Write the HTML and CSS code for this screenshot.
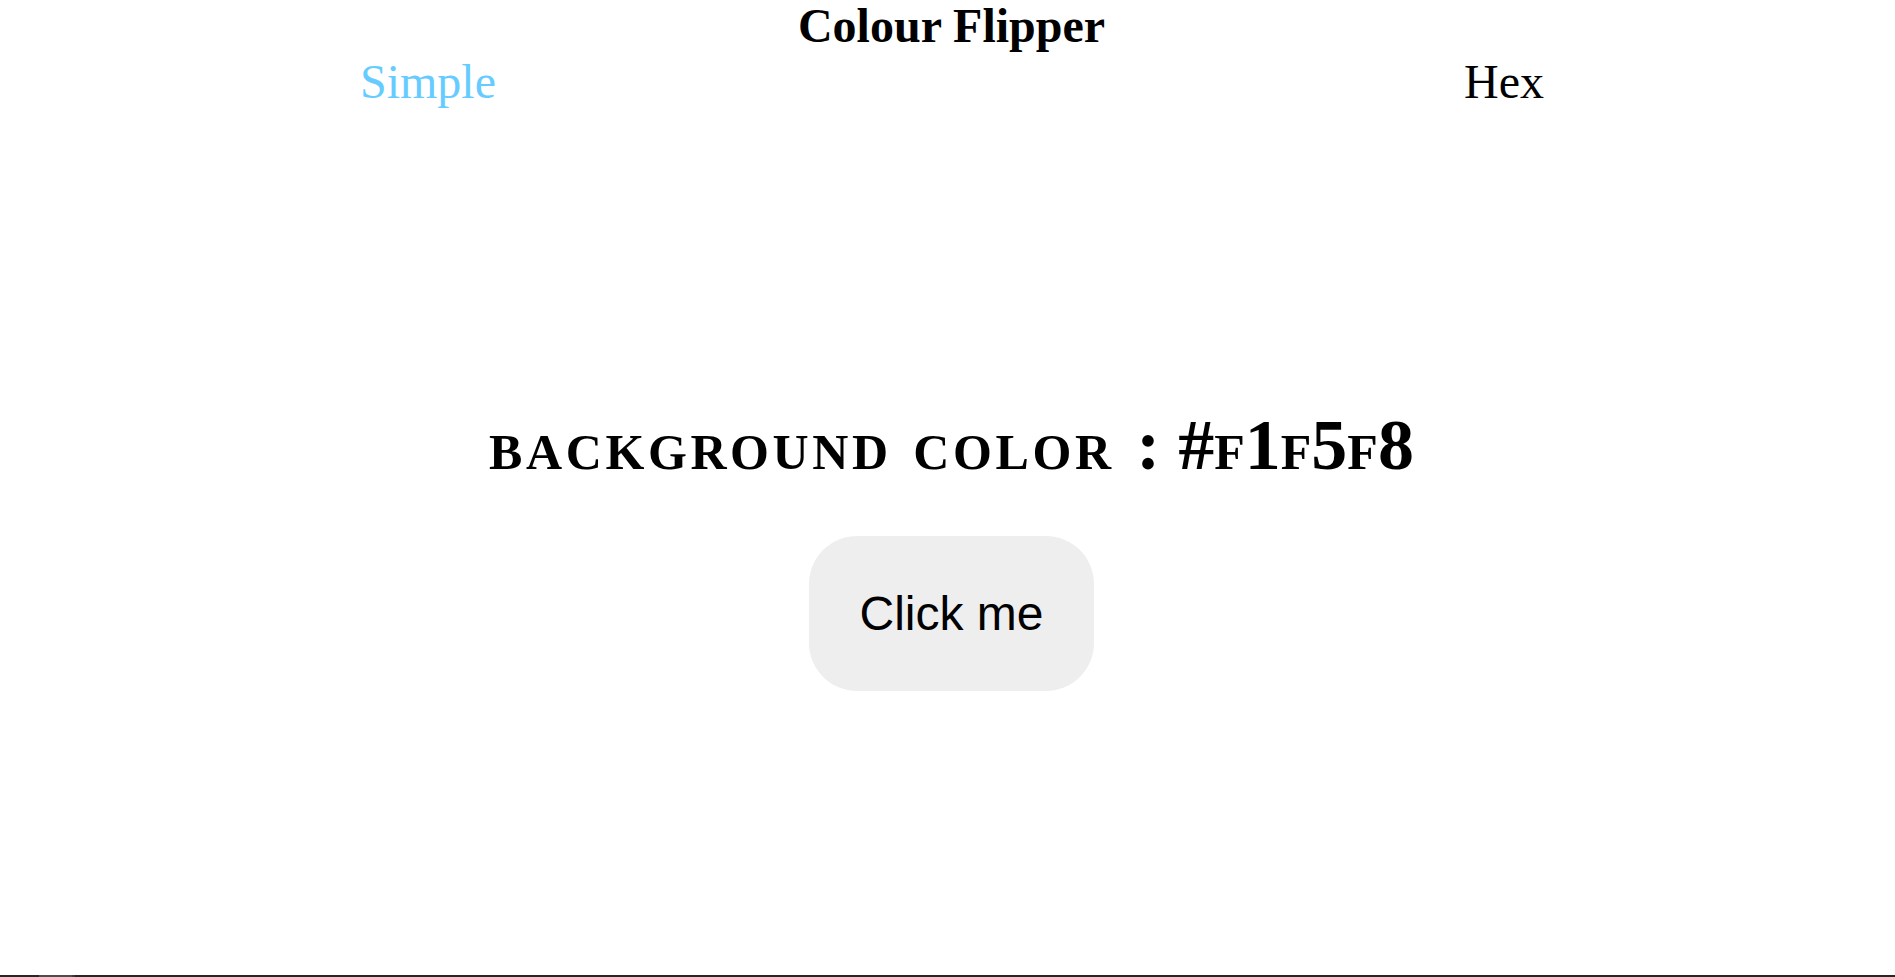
FILE: index.html
```html
<!DOCTYPE html>
<html lang="en">
<head>
<meta charset="utf-8">
<title>Colour Flipper</title>
<link rel="stylesheet" href="styles.css">
</head>
<body>
<div class="page">
  <h1 class="title">Colour Flipper</h1>
  <nav class="nav">
    <a class="nav-link active" href="#">Simple</a>
    <a class="nav-link" href="#">Hex</a>
  </nav>
  <main class="main">
    <h2 class="color-label"><span class="label-words">background color </span>: <span class="label-value">#f1f5f8</span></h2>
    <button class="flip-btn" type="button">Click me</button>
  </main>
</div>
<div class="hscroll"><div class="hscroll-thumb"></div><div class="hscroll-end"></div></div>
</body>
</html>
```
FILE: styles.css
```css
html, body {
  margin: 0;
  padding: 0;
  background: #ffffff;
}

body {
  font-family: "Liberation Serif", "Times New Roman", serif;
  color: #000;
  overflow: hidden;
  height: 977px;
}

.page {
  margin-left: 8px;
  width: 1887px;
  display: flex;
  flex-direction: column;
}

.title {
  margin: 0;
  font-size: 48px;
  font-weight: bold;
  text-align: center;
  line-height: 52px;
}

.nav {
  display: flex;
  justify-content: space-between;
  padding: 0 351px 0 352px;
  margin-top: 4px;
}

.nav-link {
  font-size: 48px;
  line-height: 52px;
  color: #000;
  text-decoration: none;
}

.nav-link.active {
  color: #66ccff;
}

.main {
  display: flex;
  flex-direction: column;
  align-items: center;
  padding-top: 296px;
}

.color-label {
  margin: 0;
  font-size: 72px;
  font-weight: bold;
  font-variant: small-caps;
  line-height: 83px;
}

.label-words {
  letter-spacing: 3.6px;
}

.flip-btn {
  margin-top: 49px;
  font-family: "Liberation Sans", Arial, sans-serif;
  font-size: 48px;
  line-height: 55px;
  padding: 50px 50px;
  border: none;
  border-radius: 48px;
  background: #eeeeee;
  color: #000;
}

.hscroll {
  position: fixed;
  left: 0;
  right: 0;
  bottom: 0;
  height: 2px;
  background: #262626;
  display: flex;
}

.hscroll-thumb {
  margin-left: 39px;
  width: 33px;
  background: #4d4d4d;
}

.hscroll-end {
  width: 3px;
  background: #3a3a3a;
}
```
